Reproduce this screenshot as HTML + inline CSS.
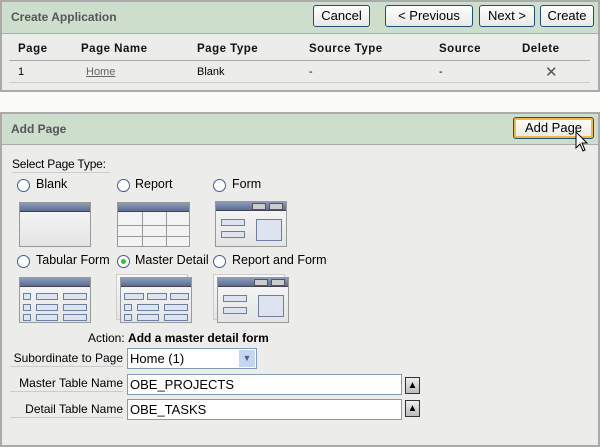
<!DOCTYPE html><html><head><style>
*{margin:0;padding:0;box-sizing:border-box}
body{width:600px;height:447px;background:#fbfcfa;font-family:"Liberation Sans",sans-serif;font-size:12px;color:#000;position:relative;overflow:hidden}
.a{position:absolute;white-space:nowrap}
.box{position:absolute;left:0;width:600px;border:2px solid #aaa;background:#ececea}
.hd{position:absolute;left:0;right:0;top:0;background:#cddfcc;border-bottom:1px solid #aaa;font-weight:bold;color:#555;font-size:12px}
.btn{position:absolute;height:22px;border:1px solid #1f4e79;border-radius:3px;background:linear-gradient(#fff,#e9e9e6);font-size:13px;text-align:center;line-height:20px;color:#000}
.th{position:absolute;top:43px;font-weight:bold;font-size:11.5px;letter-spacing:.5px;color:#111}
.r{position:absolute;width:13px;height:13px;border-radius:50%;border:1.5px solid #3b6188;background:#fff}
.lbl{position:absolute;font-size:12.5px;white-space:nowrap}
.th2{position:absolute;border:1px solid #999;background:linear-gradient(#f8f8f8,#e4e4e4)}
.bar{position:absolute;left:0;right:0;top:0;height:9px;background:linear-gradient(#8d9dbb,#5a6d92);border-bottom:1px solid #445}
.f{position:absolute;border:1px solid #6d7fa3;background:#dde3ef;height:7px}
.inp{position:absolute;background:#fff;border:1px solid #7f9db9;font-size:13px;padding-left:2px;line-height:19px}
.fl{position:absolute;text-align:right;font-size:12px;border-bottom:1px solid #ccc;line-height:16px;white-space:nowrap}
.up{position:absolute;width:15px;height:17px;border:1px solid #333;background:linear-gradient(#eee,#bbb);font-size:10px;text-align:center;line-height:16px}
</style></head><body>
<div class="box" style="top:0;height:92px">
 <div class="hd" style="height:32px;padding:8px 0 0 9px">Create Application</div>
</div>
<div class="btn" style="left:313px;top:5px;width:57px">Cancel</div>
<div class="btn" style="left:385px;top:5px;width:88px">&lt; Previous</div>
<div class="btn" style="left:479px;top:5px;width:56px">Next &gt;</div>
<div class="btn" style="left:540px;top:5px;width:54px">Create</div>
<div class="th" style="left:18px">Page</div>
<div class="th" style="left:81px">Page Name</div>
<div class="th" style="left:197px">Page Type</div>
<div class="th" style="left:309px">Source Type</div>
<div class="th" style="left:439px">Source</div>
<div class="th" style="left:522px">Delete</div>
<div class="a" style="left:9px;top:60px;width:581px;height:1px;background:#aaa"></div>
<div class="a" style="left:18px;top:66px;font-size:11px">1</div>
<div class="a" style="left:86px;top:66px;font-size:11px;color:#666;text-decoration:underline">Home</div>
<div class="a" style="left:197px;top:66px;font-size:11px">Blank</div>
<div class="a" style="left:309px;top:66px;font-size:11px">-</div>
<div class="a" style="left:439px;top:66px;font-size:11px">-</div>
<div class="a" style="left:545px;top:63px;font-size:15px;color:#555">✕</div>
<div class="a" style="left:9px;top:82px;width:581px;height:1px;background:#ccc"></div>

<div class="box" style="top:112px;height:335px">
 <div class="hd" style="height:31px;padding:8px 0 0 9px">Add Page</div>
</div>
<div class="btn" style="left:513px;top:117px;width:81px;border-color:#1f4e79;box-shadow:inset 0 0 0 2px #f5b642">Add Page</div>
<svg class="a" style="left:575px;top:131px" width="14" height="22" viewBox="0 0 14 22"><path d="M1 1V17L5 13L8 20L10 19L7 12H12Z" fill="#fff" stroke="#000"/></svg>

<div class="a" style="left:12px;top:157px;font-size:12px;border-bottom:1px solid #ccc;width:98px;padding-bottom:1px;letter-spacing:-.2px">Select Page Type:</div>
<div class="r" style="left:17px;top:179px"></div><div class="lbl" style="left:36px;top:177px">Blank</div>
<div class="r" style="left:117px;top:179px"></div><div class="lbl" style="left:135px;top:177px">Report</div>
<div class="r" style="left:213px;top:179px"></div><div class="lbl" style="left:232px;top:177px">Form</div>
<div class="r" style="left:17px;top:255px"></div><div class="lbl" style="left:36px;top:253px">Tabular Form</div>
<div class="r" style="left:117px;top:255px"><div class="a" style="left:3px;top:3px;width:5px;height:5px;border-radius:50%;background:#2c2"></div></div><div class="lbl" style="left:135px;top:253px">Master Detail</div>
<div class="r" style="left:213px;top:255px"></div><div class="lbl" style="left:232px;top:253px">Report and Form</div>

<div class="th2" style="left:19px;top:202px;width:72px;height:45px"><div class="bar"></div></div>
<div class="th2" style="left:117px;top:202px;width:73px;height:45px;background:linear-gradient(90deg,transparent 24px,#999 24px,#999 25px,transparent 25px,transparent 48px,#999 48px,#999 49px,transparent 49px),linear-gradient(transparent 22px,#999 22px,#999 23px,transparent 23px,transparent 33px,#999 33px,#999 34px,transparent 34px),#f3f3f3"><div class="bar"></div></div>
<div class="th2" style="left:215px;top:201px;width:72px;height:46px"><div class="bar"><div class="a" style="right:20px;top:1px;width:14px;height:7px;background:#ccc;border:1px solid #555"></div><div class="a" style="right:3px;top:1px;width:14px;height:7px;background:#ccc;border:1px solid #555"></div></div><div class="f" style="left:5px;top:17px;width:24px"></div><div class="f" style="left:5px;top:29px;width:24px"></div><div class="f" style="left:40px;top:17px;width:26px;height:22px"></div></div>

<div class="th2" style="left:19px;top:277px;width:72px;height:46px"><div class="bar"></div><div class="f" style="left:3px;top:15px;width:8px"></div><div class="f" style="left:16px;top:15px;width:22px"></div><div class="f" style="left:43px;top:15px;width:24px"></div><div class="f" style="left:3px;top:26px;width:8px"></div><div class="f" style="left:16px;top:26px;width:22px"></div><div class="f" style="left:43px;top:26px;width:24px"></div><div class="f" style="left:3px;top:36px;width:8px"></div><div class="f" style="left:16px;top:36px;width:22px"></div><div class="f" style="left:43px;top:36px;width:24px"></div></div>
<div class="th2" style="left:116px;top:274px;width:72px;height:46px;border-color:#ccc"></div>
<div class="th2" style="left:120px;top:277px;width:72px;height:46px"><div class="bar"></div><div class="f" style="left:3px;top:15px;width:20px"></div><div class="f" style="left:26px;top:15px;width:20px"></div><div class="f" style="left:49px;top:15px;width:19px"></div><div class="f" style="left:3px;top:26px;width:8px"></div><div class="f" style="left:16px;top:26px;width:22px"></div><div class="f" style="left:43px;top:26px;width:24px"></div><div class="f" style="left:3px;top:36px;width:8px"></div><div class="f" style="left:16px;top:36px;width:22px"></div><div class="f" style="left:43px;top:36px;width:24px"></div></div>
<div class="th2" style="left:213px;top:274px;width:72px;height:46px;border-color:#ccc"></div>
<div class="th2" style="left:217px;top:277px;width:72px;height:46px"><div class="bar"><div class="a" style="right:20px;top:1px;width:14px;height:7px;background:#ccc;border:1px solid #555"></div><div class="a" style="right:3px;top:1px;width:14px;height:7px;background:#ccc;border:1px solid #555"></div></div><div class="f" style="left:5px;top:17px;width:24px"></div><div class="f" style="left:5px;top:29px;width:24px"></div><div class="f" style="left:40px;top:17px;width:26px;height:22px"></div></div>

<div class="a" style="left:88px;top:331px;font-size:12px">Action: <b>Add a master detail form</b></div>
<div class="fl" style="left:10px;top:350px;width:113px">Subordinate to Page</div>
<div class="inp" style="left:127px;top:348px;width:130px;height:21px;border-color:#7f9db9">Home (1)<div class="a" style="right:1px;top:1px;width:16px;height:17px;background:#c5d5f2;color:#4d6185;font-size:9px;text-align:center;line-height:17px">▼</div></div>
<div class="fl" style="left:10px;top:375px;width:113px">Master Table Name</div>
<div class="inp" style="left:127px;top:374px;width:275px;height:21px">OBE_PROJECTS</div>
<div class="up" style="left:405px;top:377px">▲</div>
<div class="fl" style="left:10px;top:401px;width:113px">Detail Table Name</div>
<div class="inp" style="left:127px;top:399px;width:275px;height:21px">OBE_TASKS</div>
<div class="up" style="left:405px;top:400px">▲</div>
</body></html>
